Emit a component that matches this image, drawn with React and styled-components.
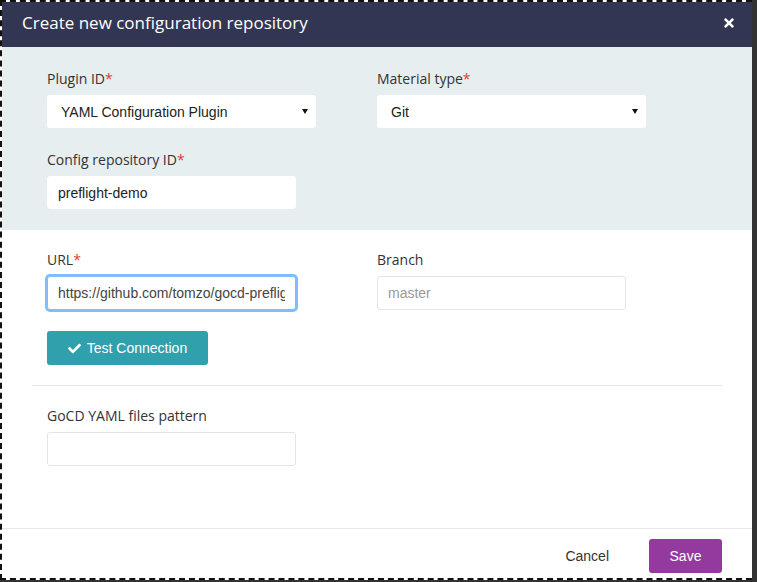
import styled, { createGlobalStyle } from 'styled-components';
import { FaCheck, FaTimes } from 'react-icons/fa';

const GlobalStyle = createGlobalStyle`
  html, body {
    margin: 0;
    padding: 0;
    background: #333;
  }
  * {
    box-sizing: border-box;
  }
`;

export default function App() {
  return (
    <>
      <GlobalStyle />
      <Modal>
        <Header>
          <h1>Create new configuration repository</h1>
          <CloseButton aria-label="close">
            <FaTimes />
          </CloseButton>
        </Header>

        <GraySection>
          <Row>
            <Field>
              <Label required>Plugin ID</Label>
              <SelectBox>
                <select defaultValue="yaml">
                  <option value="yaml">YAML Configuration Plugin</option>
                </select>
              </SelectBox>
            </Field>
            <Field>
              <Label required>Material type</Label>
              <SelectBox>
                <select defaultValue="git">
                  <option value="git">Git</option>
                </select>
              </SelectBox>
            </Field>
          </Row>
          <Row>
            <Field>
              <Label required>Config repository ID</Label>
              <TextInput borderless defaultValue="preflight-demo" />
            </Field>
          </Row>
        </GraySection>

        <Body>
          <Row>
            <Field>
              <Label required>URL</Label>
              <TextInput focused readOnly value="https://github.com/tomzo/gocd-preflight-demo.git" />
            </Field>
            <Field>
              <Label>Branch</Label>
              <TextInput placeholder="master" />
            </Field>
          </Row>
          <TestButton>
            <FaCheck />
            Test Connection
          </TestButton>
          <Divider />
          <Row>
            <Field>
              <Label>GoCD YAML files pattern</Label>
              <TextInput />
            </Field>
          </Row>
        </Body>

        <Footer>
          <LinkButton>Cancel</LinkButton>
          <SaveButton>Save</SaveButton>
        </Footer>
      </Modal>
    </>
  );
}

const Modal = styled.div`
  width: 752px;
  height: 580px;
  background: #fff;
  border: 2px dashed #111;
  border-right: none;
  display: flex;
  flex-direction: column;
  font-family: 'Open Sans', sans-serif;
  color: #333;
`;

const Header = styled.div`
  height: 45px;
  background: #333652;
  display: flex;
  align-items: center;
  justify-content: space-between;
  padding: 0 16px 4px 20px;

  h1 {
    margin: 0;
    font-size: 17px;
    font-weight: 400;
    color: #fff;
  }
`;

const CloseButton = styled.button`
  background: none;
  border: none;
  padding: 0;
  color: #fff;
  font-size: 14px;
  display: flex;
  cursor: pointer;
`;

const GraySection = styled.div`
  background: #e7eef0;
  padding: 22px 0 21px;
  display: flex;
  flex-direction: column;
  gap: 22px;
`;

const Body = styled.div`
  flex: 1;
  padding-top: 20px;
  display: flex;
  flex-direction: column;
`;

const Row = styled.div`
  display: flex;
  padding: 0 45px;
  gap: 61px;
`;

const Field = styled.div`
  width: 269px;
  display: flex;
  flex-direction: column;
`;

const Label = styled.label`
  font-size: 14px;
  line-height: 20px;
  margin-bottom: 6px;
  color: #333;

  &::after {
    content: ${props => (props.required ? "'*'" : "''")};
    color: #e53935;
  }
`;

const SelectBox = styled.div`
  position: relative;
  width: 269px;

  select {
    appearance: none;
    width: 100%;
    height: 33px;
    border: none;
    border-radius: 3px;
    background: #fff;
    padding: 0 24px 0 14px;
    font-family: 'Liberation Sans', Arial, sans-serif;
    font-size: 14px;
    color: #222;
    outline: none;
  }

  &::after {
    content: '';
    position: absolute;
    right: 8px;
    top: 14px;
    border-left: 3px solid transparent;
    border-right: 3px solid transparent;
    border-top: 5px solid #111;
    pointer-events: none;
  }
`;

const TextInput = styled.input`
  width: 249px;
  height: ${props => (props.borderless ? '33px' : '34px')};
  border: 1px solid ${props => (props.borderless ? '#fff' : '#e2e6e8')};
  border-radius: 3px;
  background: #fff;
  padding: 0 10px;
  font-family: 'Liberation Sans', Arial, sans-serif;
  font-size: 14px;
  color: ${props => (props.focused ? '#444' : '#222')};
  outline: none;
  box-shadow: ${props => (props.focused ? '0 0 0 2px #80bdff' : 'none')};
  ${props => props.focused && 'border-color: #80bdff;'}

  &::placeholder {
    color: #999;
  }
`;

const TestButton = styled.button`
  margin: 21px 0 0 45px;
  width: 161px;
  height: 34px;
  border: none;
  border-radius: 3px;
  background: #30a1ac;
  color: #fff;
  font-family: 'Liberation Sans', Arial, sans-serif;
  font-size: 14px;
  display: flex;
  align-items: center;
  justify-content: center;
  gap: 6px;
  cursor: pointer;

  svg {
    font-size: 13px;
  }
`;

const Divider = styled.hr`
  margin: 20px 30px 20px;
  border: none;
  border-top: 1px solid #e6e6e6;
`;

const Footer = styled.div`
  height: 50px;
  border-top: 1px solid #e6e6e6;
  display: flex;
  align-items: flex-start;
  justify-content: flex-end;
  padding: 10px 30px 0;
  gap: 20px;
`;

const LinkButton = styled.button`
  height: 34px;
  background: none;
  border: none;
  padding: 0 20px;
  font-family: 'Liberation Sans', Arial, sans-serif;
  font-size: 14px;
  color: #333;
  cursor: pointer;
`;

const SaveButton = styled.button`
  width: 73px;
  height: 34px;
  border: none;
  border-radius: 3px;
  background: #943a9e;
  color: #fff;
  font-family: 'Liberation Sans', Arial, sans-serif;
  font-size: 14px;
  cursor: pointer;
`;
